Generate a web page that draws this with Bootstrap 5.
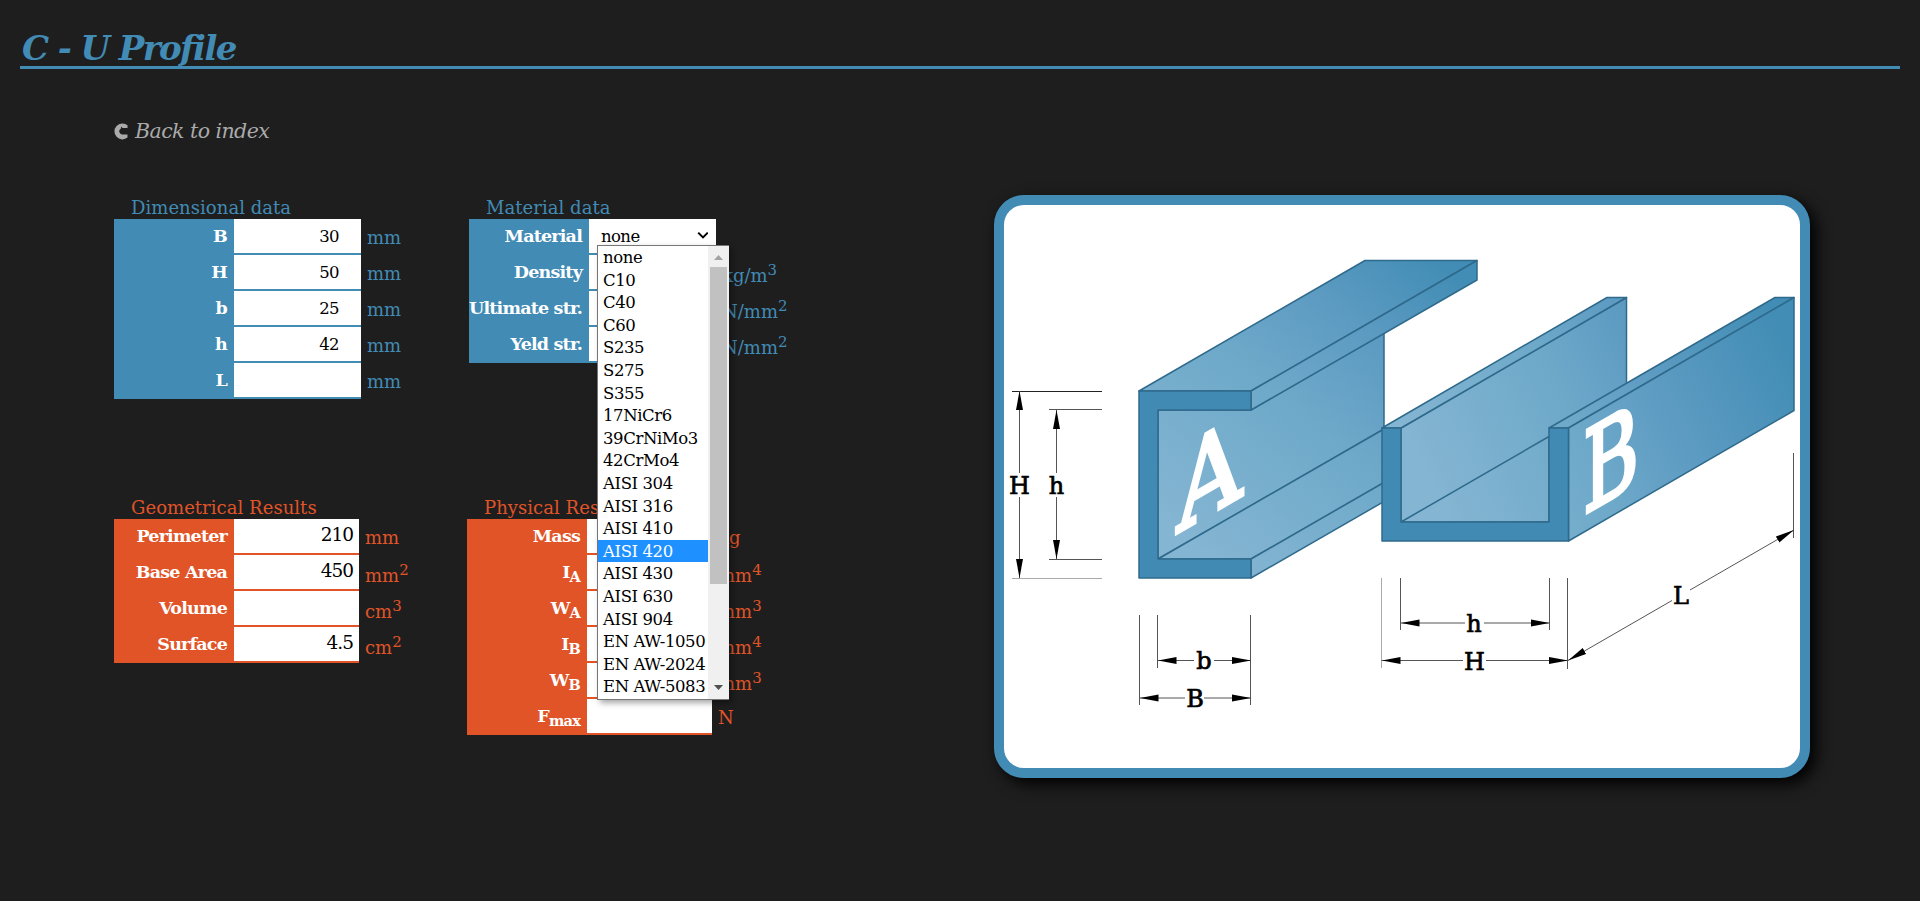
<!DOCTYPE html>
<html lang="en">
<head>
<meta charset="utf-8">
<meta name="viewport" content="width=device-width, initial-scale=1">
<title>C - U Profile</title>
<link href="https://cdn.jsdelivr.net/npm/bootstrap@5.3.0/dist/css/bootstrap.min.css" rel="stylesheet">
<style>
:root{--steel:#428bb5;--rust:#e05428}
body{background:#1e1e1e;font-family:"DejaVu Serif",serif;font-size:18px;line-height:24px;color:#000;height:901px;overflow:hidden}
.page-title{margin:20px 20px 0;height:49px;padding:6px 2px 0;border-bottom:3px solid var(--steel);color:var(--steel);font-size:34px;line-height:44px;font-weight:700;font-style:italic;letter-spacing:-1.6px}
.back-link{margin:48px 0 0 113px;height:28px;color:#aaa;font-size:20.5px;line-height:28px;font-style:italic;letter-spacing:-.55px;gap:7px}
.workspace{margin-top:40px;padding-left:114px}
.col-one{width:355px}.col-two{width:525px}
.block{height:300px}
.block.shift{margin-left:-2px}
.tone-steel{--tone:var(--steel)}.tone-rust{--tone:var(--rust)}
.block-title{height:34px;padding-left:17px;line-height:24px;padding-top:11px;color:var(--tone);letter-spacing:.05px;white-space:nowrap}
.data-row{height:36px}
.tag{width:120px;height:36px;background:var(--tone);color:#fff;font-weight:700;text-align:right;padding:5px 7px 0 0;font-size:17.5px;letter-spacing:-.8px;white-space:nowrap}
.field{width:127px;height:36px;border:0;border-bottom:2px solid var(--tone);border-radius:0;background:#fff;text-align:right;padding:1px 22px 0 12px;font-size:16.5px;line-height:34px;outline:0;font-family:inherit;letter-spacing:-.6px}
.tone-rust .field{width:125px;padding:2px 6px 0 0;font-size:18.500px;line-height:28px;letter-spacing:-1px}
.unit{color:var(--tone);padding:7px 0 0 6px;white-space:nowrap;letter-spacing:0}
.unit.raised{padding-top:9px}
sup,sub{font-size:.83em}
sup{top:-.5em}
.choices{position:absolute;left:8px;top:26px;width:132px;height:455px;background:#fff;border:1px solid #767676;border-right:0;box-shadow:3px 3px 6px rgba(0,0,0,.35);z-index:5}
.choices li{height:22.6px;line-height:24px;padding-left:5px;font-size:16.5px;letter-spacing:-.4px;white-space:nowrap}
.choices li.on{background:#1e90ff;color:#fff}
.scroller{width:21px;background:#f0f0f0}
.thumb{width:17px;height:317px;margin:0 2px;background:#c1c1c1}
.figure-card{width:816px;height:583px;margin-top:10px;border:10px solid var(--steel);border-radius:30px;background:#fff;overflow:hidden;box-shadow:6px 6px 16px #000}
</style>
</head>
<body>
<header><h1 class="page-title">C - U Profile</h1></header>
<a class="back-link d-flex align-items-center text-decoration-none" href="#">
<svg width="15" height="17" viewBox="0 0 15 17"><path d="M14.5 2.2A8 8 0 1 0 14.5 14.6L14.5 11.6H9A3.3 3.3 0 0 1 8 5.4V3.6L9.5 5H14.5Z" fill="#aaa"/></svg>
<span>Back to index</span></a>
<main class="workspace d-flex">
<div class="col-one flex-shrink-0">
<section class="block tone-steel">
<div class="block-title">Dimensional data</div>
<div class="data-row d-flex"><label class="tag">B</label><input class="field" value="30"><span class="unit">mm</span></div>
<div class="data-row d-flex"><label class="tag">H</label><input class="field" value="50"><span class="unit">mm</span></div>
<div class="data-row d-flex"><label class="tag">b</label><input class="field" value="25"><span class="unit">mm</span></div>
<div class="data-row d-flex"><label class="tag">h</label><input class="field" value="42"><span class="unit">mm</span></div>
<div class="data-row d-flex"><label class="tag">L</label><input class="field" value=""><span class="unit">mm</span></div>
</section>
<section class="block tone-rust">
<div class="block-title">Geometrical Results</div>
<div class="data-row d-flex"><div class="tag">Perimeter</div><div class="field">210</div><span class="unit">mm</span></div>
<div class="data-row d-flex"><div class="tag">Base Area</div><div class="field">450</div><span class="unit raised">mm<sup>2</sup></span></div>
<div class="data-row d-flex"><div class="tag">Volume</div><div class="field"></div><span class="unit raised">cm<sup>3</sup></span></div>
<div class="data-row d-flex"><div class="tag">Surface</div><div class="field">4.5</div><span class="unit raised">cm<sup>2</sup></span></div>
</section>
</div>
<div class="col-two flex-shrink-0">
<section class="block tone-steel">
<div class="block-title">Material data</div>
<div class="data-row d-flex"><div class="tag">Material</div>
<div class="field d-flex justify-content-between position-relative pe-2"><span>none</span>
<svg width="12" height="34" viewBox="1 1 12 34"><path d="M3.200 13.600 8 18.400l4.800-4.800" fill="none" stroke="#000" stroke-width="2" overflow="visible"/></svg>
<div class="choices d-flex text-start">
<ul class="list-unstyled flex-grow-1 mb-0">
<li>none</li><li>C10</li><li>C40</li><li>C60</li><li>S235</li><li>S275</li><li>S355</li><li>17NiCr6</li><li>39CrNiMo3</li><li>42CrMo4</li><li>AISI 304</li><li>AISI 316</li><li>AISI 410</li><li class="on">AISI 420</li><li>AISI 430</li><li>AISI 630</li><li>AISI 904</li><li>EN AW-1050</li><li>EN AW-2024</li><li>EN AW-5083</li>
</ul>
<div class="scroller flex-shrink-0">
<svg class="d-block" width="21" height="21"><path d="M6 14h9l-4.500-5z" fill="#a3a3a3"/></svg>
<div class="thumb"></div>
<svg class="d-block" width="21" height="115"><path d="M6 101h9l-4.500 5z" fill="#505050"/></svg>
</div></div></div></div>
<div class="data-row d-flex"><div class="tag">Density</div><div class="field"></div><span class="unit raised">kg/m<sup>3</sup></span></div>
<div class="data-row d-flex"><div class="tag">Ultimate str.</div><div class="field"></div><span class="unit raised">N/mm<sup>2</sup></span></div>
<div class="data-row d-flex"><div class="tag">Yeld str.</div><div class="field"></div><span class="unit raised">N/mm<sup>2</sup></span></div>
</section>
<section class="block shift tone-rust">
<div class="block-title">Physical Results</div>
<div class="data-row d-flex"><div class="tag">Mass</div><div class="field"></div><span class="unit">kg</span></div>
<div class="data-row d-flex"><div class="tag">I<sub>A</sub></div><div class="field"></div><span class="unit raised">mm<sup>4</sup></span></div>
<div class="data-row d-flex"><div class="tag">W<sub>A</sub></div><div class="field"></div><span class="unit raised">mm<sup>3</sup></span></div>
<div class="data-row d-flex"><div class="tag">I<sub>B</sub></div><div class="field"></div><span class="unit raised">mm<sup>4</sup></span></div>
<div class="data-row d-flex"><div class="tag">W<sub>B</sub></div><div class="field"></div><span class="unit raised">mm<sup>3</sup></span></div>
<div class="data-row d-flex"><div class="tag">F<sub>max</sub></div><div class="field"></div><span class="unit">N</span></div>
</section>
</div>
<div class="figure-card flex-shrink-0">
<svg class="d-block" width="796" height="563" viewBox="1004 205 796 563">
<defs>
<linearGradient id="ga" gradientUnits="userSpaceOnUse" x1="1190" y1="540" x2="1425" y2="250"><stop offset="0" stop-color="#84b5d2"/><stop offset=".45" stop-color="#6ea9c9"/><stop offset=".7" stop-color="#5f9cc3"/><stop offset="1" stop-color="#428db5"/></linearGradient>
<linearGradient id="gb" gradientUnits="userSpaceOnUse" x1="1440" y1="500" x2="1780" y2="330"><stop offset="0" stop-color="#84b5d2"/><stop offset=".4" stop-color="#6ea9c9"/><stop offset=".62" stop-color="#5f9cc3"/><stop offset="1" stop-color="#428db5"/></linearGradient>
<marker id="tip" viewBox="0 0 19 8" refX="19" refY="4" markerWidth="19" markerHeight="8" markerUnits="userSpaceOnUse" orient="auto"><path d="M0 .5 19 4 0 7.500Z"/></marker>
</defs>
<!-- profile A -->
<g stroke="#2f6a8c" stroke-width="1.500" stroke-linejoin="round" fill="url(#ga)">
<path d="M1158 410H1251L1384 333V429L1158 559Z"/>
<path d="M1158 559 1384 429H1477L1251 559Z"/>
<path d="M1251 559 1477 429V448L1251 578Z"/>
<path d="M1139 391 1365 260.500H1477L1251 391Z"/>
<path d="M1251 391 1477 260.500V280L1251 410Z"/>
<path fill="#418ab4" d="M1139 391H1251V410H1158V559H1251V578H1139Z"/>
</g>
<!-- profile B -->
<g stroke="#2f6a8c" stroke-width="1.500" stroke-linejoin="round" fill="url(#gb)">
<path d="M1401 428 1626.500 297.500V391L1549 522H1401Z"/>
<path d="M1401 522 1549 436.500V522Z"/>
<path d="M1382 428 1607 297.500H1626.500L1401 428Z"/>
<path d="M1549 428 1775 297.500H1794L1568.500 428Z"/>
<path d="M1568.500 428 1794 297.500V410.500L1568.500 541Z"/>
<path fill="#418ab4" d="M1382 428H1401V522H1549V428H1568.500V541H1382Z"/>
</g>
<g fill="#fff" stroke="#fff" stroke-width="4" font-size="113">
<text transform="matrix(1 -.577 0 1 1177 533)" textLength="65" lengthAdjust="spacingAndGlyphs">A</text>
<text transform="matrix(1 -.577 0 1 1583 515)" textLength="56" lengthAdjust="spacingAndGlyphs">B</text>
</g>
<!-- extension lines -->
<path fill="none" stroke="#555" stroke-width="1" d="M1049 409.500H1102M1049 559.500H1102M1157.500 615V668M1139.500 615V705M1250.500 615V705M1400.500 578V630M1549.500 578V630M1567.500 578V669M1793.500 453V538"/>
<path stroke="#222" d="M1012 391.500H1102"/>
<path stroke="#aaa" d="M1012 578.500H1102M1381.500 578V668"/>
<!-- dimension lines -->
<g fill="none" stroke="#555" stroke-width="1">
<path marker-end="url(#tip)" d="M1019.500 473V391"/><path marker-end="url(#tip)" d="M1019.500 497V578"/>
<path marker-end="url(#tip)" d="M1056.500 473V410"/><path marker-end="url(#tip)" d="M1056.500 497V559"/>
<path marker-end="url(#tip)" d="M1194 660.500H1157.500"/><path marker-end="url(#tip)" d="M1214 660.500H1251"/>
<path marker-end="url(#tip)" d="M1185 698H1139.500"/><path marker-end="url(#tip)" d="M1204 698H1251"/>
<path marker-end="url(#tip)" d="M1465 623H1400.500"/><path marker-end="url(#tip)" d="M1484 623H1549.500"/>
<path marker-end="url(#tip)" d="M1463 660.500H1381.500"/><path marker-end="url(#tip)" d="M1486 660.500H1568"/>
<path marker-end="url(#tip)" d="M1672 600.500 1568 660.500"/><path marker-end="url(#tip)" d="M1690 590 1794 530"/>
</g>
<g font-size="24" text-anchor="middle" stroke="#000" stroke-width=".7">
<text x="1019.500" y="494">H</text><text x="1056.500" y="494">h</text><text x="1204" y="669">b</text><text x="1195" y="707">B</text><text x="1474" y="632">h</text><text x="1474.500" y="669.500">H</text><text x="1681" y="604">L</text>
</g>
</svg>
</div>
</main>
<script src="https://cdn.jsdelivr.net/npm/bootstrap@5.3.0/dist/js/bootstrap.bundle.min.js"></script>
</body>
</html>
